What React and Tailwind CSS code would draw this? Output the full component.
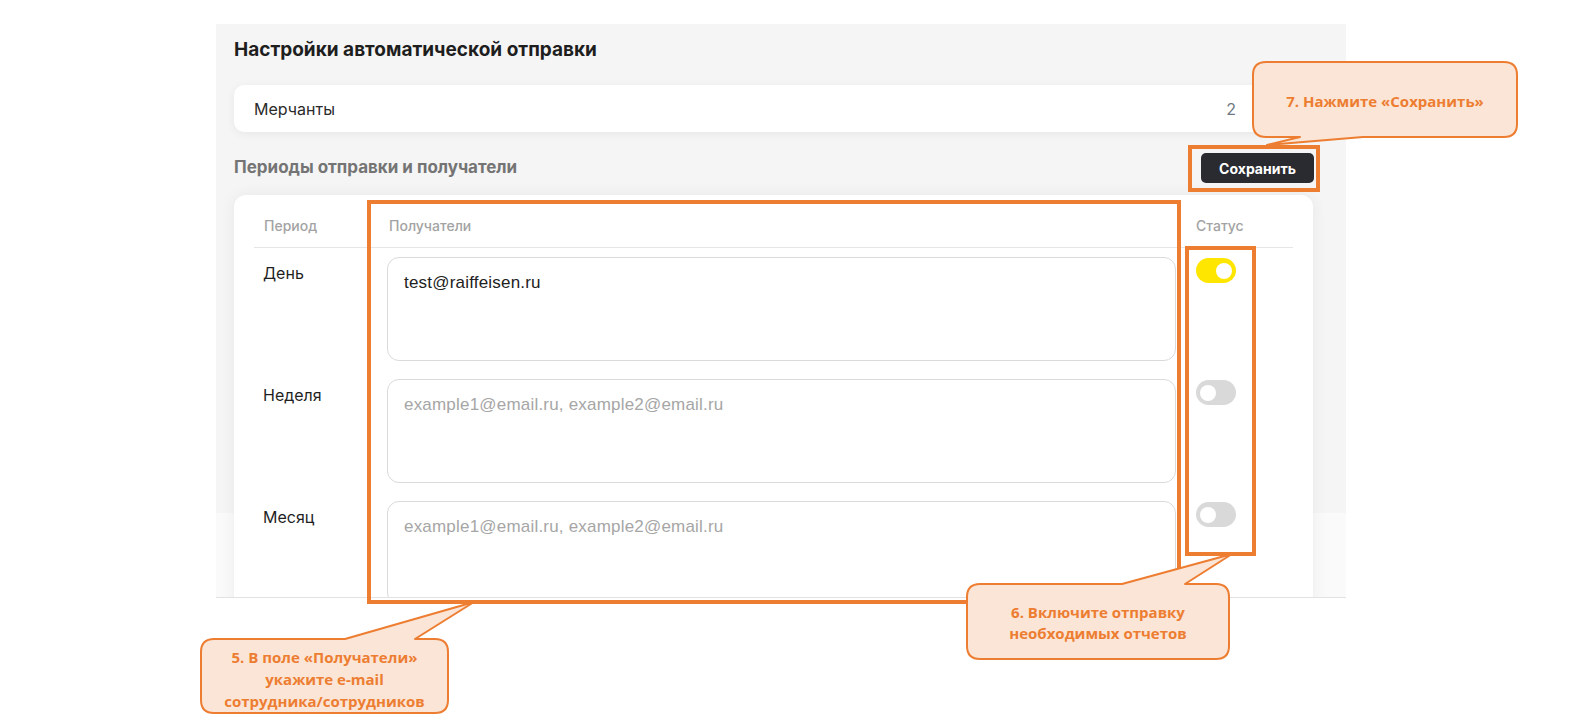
import React from "react";

const UI = { fontFamily: "Inter, 'Noto Sans', sans-serif" };
const ARIAL = { fontFamily: "'Liberation Sans', Arial, sans-serif", letterSpacing: "0.2px" };
const CALLOUT = { fontFamily: "'Open Sans', 'Noto Sans', sans-serif" };

function Toggle({ on }) {
  return on ? (
    <div className="w-10 h-[25px] rounded-full bg-[#fee600] flex items-center justify-end px-1">
      <div className="w-4 h-4 rounded-full bg-white" />
    </div>
  ) : (
    <div className="w-10 h-[25px] rounded-full bg-[#d9d9d9] flex items-center justify-start px-1">
      <div className="w-4 h-4 rounded-full bg-white" />
    </div>
  );
}

function Row({ label, value, on }) {
  return (
    <div className="flex py-[9px]">
      <div className="w-[123px] pl-[9px] pt-[4px] text-[16px] leading-6 text-[#1f1f1f]">{label}</div>
      <div className="w-[809px] px-[10px]">
        <textarea
          readOnly
          defaultValue={value}
          placeholder="example1@email.ru, example2@email.ru"
          style={ARIAL}
          className="block w-[789px] h-[104px] resize-none outline-none border border-[#dadada] rounded-[12px] px-4 pt-[15px] text-[17px] leading-5 text-[#222] placeholder:text-[#a6a6a6] bg-white"
        />
      </div>
      <div className="pl-[10px] pt-[1px]">
        <Toggle on={on} />
      </div>
    </div>
  );
}

export default function App() {
  return (
    <div className="relative w-[1571px] h-[727px] overflow-hidden bg-white" style={UI}>
      <div className="ml-[216px] mt-[24px] w-[1130px] h-[574px] overflow-hidden border-b border-[#e2e2e2] bg-[linear-gradient(to_bottom,#f5f5f5_489px,#fafafa_489px)] pl-[18px] pr-[33px] pt-[14px]">
        <div className="text-[19px] leading-6 font-bold text-[#1e1e1e]">Настройки автоматической отправки</div>
        <div className="mt-[23px] h-[47px] bg-white rounded-[10px] shadow-[0_2px_10px_rgba(0,0,0,0.06)] flex items-center justify-between pl-5 pr-[77px]">
          <span className="text-[16px] text-[#2a2a2a]">Мерчанты</span>
          <span className="text-[16px] text-[#6f7782]">2</span>
        </div>
        <div className="mt-[21px] h-[30px] flex items-center justify-between">
          <span className="text-[17px] font-bold text-[#747474]">Периоды отправки и получатели</span>
          <button className="h-[30px] w-[113px] mr-[-1px] bg-[#2a2b30] rounded-[5px] text-white text-[14px] font-bold">
            Сохранить
          </button>
        </div>
        <div className="mt-[12px] bg-white rounded-t-[12px] shadow-[0_0_16px_rgba(0,0,0,0.06)] px-5">
          <div className="flex border-b border-[#e6e6e6] pt-[22px] pb-[12px] text-[14px] leading-[18px] font-medium text-[#a3a3a3]">
            <div className="w-[123px] pl-[10px]">Период</div>
            <div className="w-[809px] pl-[12px]">Получатели</div>
            <div className="pl-[10px]">Статус</div>
          </div>
          <Row label="День" value="test@raiffeisen.ru" on />
          <Row label="Неделя" value="" />
          <Row label="Месяц" value="" />
        </div>
      </div>

      <svg className="absolute left-0 top-0 pointer-events-none" width="1571" height="727" viewBox="0 0 1571 727">
        <g fill="none" stroke="#ed7d31" strokeWidth="4">
          <rect x="369" y="202" width="810" height="400" />
          <rect x="1187" y="248" width="67" height="306" />
          <rect x="1190" y="147" width="128" height="43" />
        </g>
        <g fill="#fbe5d6" stroke="#ed7d31" strokeWidth="2" strokeLinejoin="round">
          <path d="M1266 62 H1504 Q1517 62 1517 75 V124 Q1517 137 1504 137 H1363 L1267 145 L1300 137 H1266 Q1253 137 1253 124 V75 Q1253 62 1266 62 Z" />
          <path d="M980 584 H1122 L1232 554 L1185 584 H1216 Q1229 584 1229 597 V646 Q1229 659 1216 659 H980 Q967 659 967 646 V597 Q967 584 980 584 Z" />
          <path d="M214 639 H345 L474 602 L415 639 H435 Q448 639 448 652 V700 Q448 713 435 713 H214 Q201 713 201 700 V652 Q201 639 214 639 Z" />
        </g>
      </svg>

      <div
        style={CALLOUT}
        className="absolute left-[1253px] top-[62px] w-[264px] h-[75px] flex items-center justify-center pt-[3px] text-[15px] font-bold text-[#ed7d31]"
      >
        7. Нажмите «Сохранить»
      </div>
      <div
        style={CALLOUT}
        className="absolute left-[967px] top-[584px] w-[262px] h-[75px] flex flex-col items-center justify-center pt-[3px] text-[15px] leading-[21px] font-bold text-[#ed7d31] text-center"
      >
        <span>6. Включите отправку</span>
        <span>необходимых отчетов</span>
      </div>
      <div
        style={CALLOUT}
        className="absolute left-[201px] top-[639px] w-[247px] h-[74px] flex flex-col items-center justify-center pt-[5px] text-[15px] leading-[22px] font-bold text-[#ed7d31] text-center"
      >
        <span>5. В поле «Получатели»</span>
        <span>укажите e-mail</span>
        <span>сотрудника/сотрудников</span>
      </div>
    </div>
  );
}
